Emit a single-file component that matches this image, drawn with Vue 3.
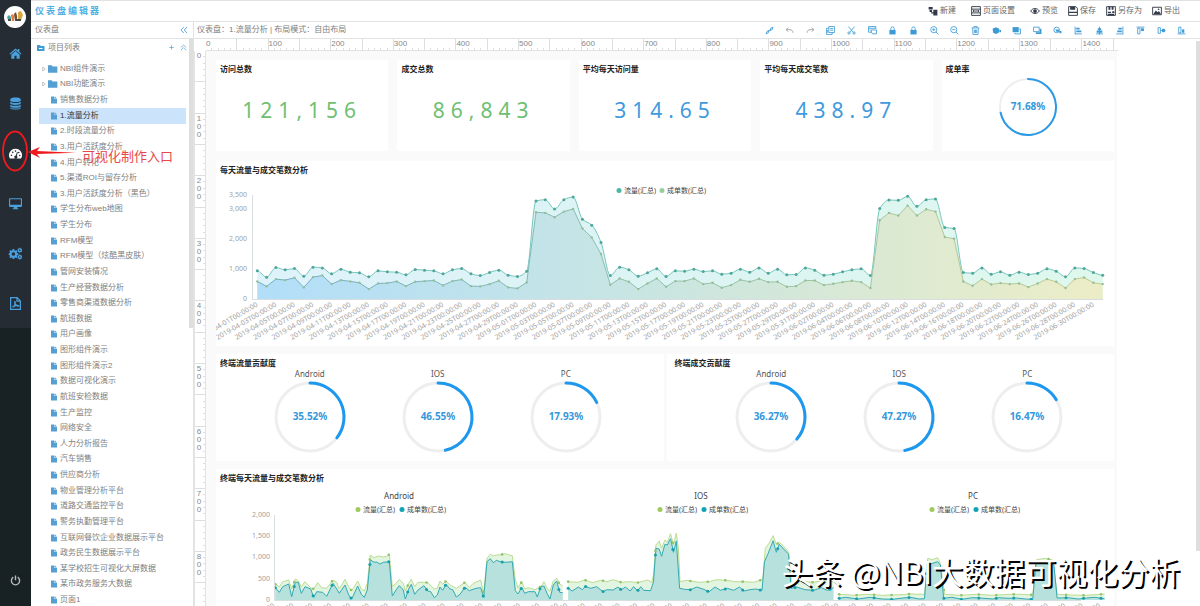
<script setup>
const tree = [
  'NBI组件演示', 'NBI功能演示', '销售数据分析', '1.流量分析', '2.时段流量分析', '3.用户活跃度分析', '4.用户转化',
  '5.渠道ROI与留存分析', '3.用户活跃度分析（黑色）', '学生分布web地图', '学生分布', 'RFM模型', 'RFM模型（炫酷黑皮肤）',
  '管网安装情况', '生产经营数据分析', '零售商渠道数据分析', '航班数据', '用户画像', '图形组件演示', '图形组件演示2',
  '数据可视化演示', '航班安检数据', '生产监控', '网络安全', '人力分析报告', '汽车销售', '供应商分析', '物业管理分析平台',
  '道路交通监控平台', '警务执勤管理平台', '互联网餐饮企业数据展示平台', '政务民生数据展示平台', '某学校招生可视化大屏数据',
  '某市政务服务大数据', '页面1',
].map((name, i) => ({ name, folder: i < 2, active: i === 3 }))

/* f: filled shape, s: stroked shape, on a 16 x 16 grid */
const icons = {
  home: [{ f: 'M8 1.8 0.6 8.2l1 1.1L8 3.9l6.4 5.4 1-1.1-2.6-2.2V2.4h-2v1.9zM8 5 2.8 9.4V14.4h3.9v-3.7h2.6v3.7h3.9V9.4z' }],
  database: [{ f: 'M1.5 3c0-3 13-3 13 0v1.2c0 2.6-13 2.6-13 0zM1.5 5.8c2 2 11 2 13 0v2c0 2.6-13 2.6-13 0zM1.5 9.4c2 2 11 2 13 0v2c0 2.6-13 2.6-13 0zM1.5 12.8c2 2 11 2 13 0v.6c0 2.8-13 2.8-13 0z' }],
  gauge: [{ f: 'M8 2a8 8 0 0 0-6.8 12.2h13.6A8 8 0 0 0 8 2zM3 9.2a1 1 0 1 1 0 2 1 1 0 0 1 0-2zM4.6 5.6a1 1 0 1 1 0 2 1 1 0 0 1 0-2zM8 4a1 1 0 1 1 0 2 1 1 0 0 1 0-2zM9.8 6.2l1.1.4-1.3 4.2a1.9 1.9 0 1 1-1.2-.4zM12 5.8a1 1 0 1 1 0 2 1 1 0 0 1 0-2zM13.2 9.4a1 1 0 1 1 0 2 1 1 0 0 1 0-2z' }],
  desktop: [{ f: 'M0 2.6C0 1.8.6 1.4 1.2 1.4h13.6c.6 0 1.2.4 1.2 1.2v8.6c0 .7-.6 1.1-1.2 1.1H10l.6 1.8h.9v1h-7v-1h.9l.6-1.8H1.2c-.6 0-1.2-.4-1.2-1.1zM1.4 2.8v6.8h13.2V2.8z' }],
  cogs: [
    { f: 'M4.4 2.6h2l.3 1.6 1 .4 1.3-.9 1.4 1.4-.9 1.3.4 1 1.6.3v2l-1.6.3-.4 1 .9 1.3L9 13.7l-1.3-.9-1 .4-.3 1.6h-2l-.3-1.6-1-.4-1.3.9L.4 12.3l.9-1.3-.4-1-1.2-.3v-2l1.2-.3.4-1-.9-1.3 1.4-1.4 1.3.9 1-.4zM5.4 6.5a2.2 2.2 0 1 0 0 4.400 2.2 2.2 0 0 0 0-4.400z' },
    { s: 'M13.3 2.2a1.7 1.7 0 1 1 0 3.4 1.7 1.7 0 1 1 0-3.4zM13.3.8v1M13.3 6v1M10.7 2.4l.9.5M15 4.9l.9.5M15.9 2.4l-.9.5M11.6 4.9l-.9.5M13.3 10.6a1.7 1.7 0 1 1 0 3.4 1.7 1.7 0 1 1 0-3.4zM13.3 9.3v1M13.3 14.4v1M10.7 10.9l.9.5M15 13.3l.9.5M15.9 10.9l-.9.5M11.6 13.3l-.9.5' },
  ],
  pdf: [{ s: 'M2 .8h8l4 4v10.4H2zM9.8 1v4H14M4.3 12.6c2-1.4 3.6-4.6 3.3-6.6-.3-1-1.3 0-.3 2 .7 1.5 1.9 3 4 3.3 1.3 0 .9-1.2-1-1.1-2 .1-4 .8-6 2.4z' }],
  power: [{ s: 'M4.8 3.2a6 6 0 1 0 6.4 0M8 .8v7' }],
  create: [{ f: 'M1 1.5h6.5v4H1zM2.5 6.5h4v3h-4zM8.5 6H15v9H8.5v-3H5v-2h3.5z' }],
  page: [{ s: 'M1 1h14v14H1zM1 5h14M1 11h14M4 8h8M4 6.5v3M12 6.5v3' }],
  eye: [{ s: 'M1 8c3.5-5.3 10.5-5.3 14 0-3.5 5.3-10.5 5.3-14 0z' }, { f: 'M8 5a3 3 0 1 1 0 6 3 3 0 0 1 0-6z' }],
  save: [{ s: 'M1 1h11.5L15 3.5V15H1z' }, { f: 'M3.5 1h8v5h-8zM1 9h14v2H1z' }],
  saveas: [{ s: 'M1 1h14v14H1z' }, { f: 'M4 1h3v5H4zM9 1h3v5H9zM3 9h5v2H3zM3 12.5h10V15H3zM10 8.5h3.5V11H10z' }],
  image: [{ s: 'M1 2h14v12H1z' }, { f: 'M2 13l4-6 3 3 2-2 3.5 5zM10.5 4a1.3 1.3 0 1 1 0 2.6 1.3 1.3 0 0 1 0-2.6z' }],
  folder: [{ f: 'M0 2h6l1.5 2H15v10H0z' }],
  doc: [{ f: 'M2 1h7v5h5v9H2zM10 1l4 4h-4z' }],
  link: [{ s: 'M2 14l1.5-4.5L7 8l-1 4zM9 8l1.2-4L14 2l-1 4zM5 11l6-6' }],
  undo: [{ s: 'M6 3 2 6.5 6 10M2.5 6.500H9c3 0 5 2 5 5.5' }],
  redo: [{ s: 'M10 3l4 3.5-4 3.5M13.5 6.500H7c-3 0-5 2-5 5.5' }],
  copy: [{ s: 'M5 1h10v10.5H5zM5 4H1v11h10v-3.5M7.5 4.500h5M7.5 7.500h5M3 7v5' }],
  cut: [{ s: 'M2.5 1l8.5 10M13.5 1 5 11M3.5 10.5a2 2 0 1 1 0 4 2 2 0 1 1 0-4zM12.5 10.5a2 2 0 1 1 0 4 2 2 0 1 1 0-4z' }],
  paste: [{ s: 'M6 11H1V1h13v4M1 4h13M6 7h9v7H9l-3-2zM3 7h2' }],
  lock: [{ f: 'M2.5 7h11v8h-11z' }, { s: 'M5 7V4.5a3 3 0 0 1 6 0V7' }],
  zoomin: [{ s: 'M6.7 1a5.5 5.5 0 1 1 0 11 5.5 5.5 0 1 1 0-11zM10.7 10.7 15 15M4 6.500h5.4M6.7 4v5' }],
  zoomout: [{ s: 'M6.7 1a5.5 5.5 0 1 1 0 11 5.5 5.5 0 1 1 0-11zM10.7 10.7 15 15M4 6.500h5.4' }],
  trash: [{ s: 'M1 3.500h14M5 3V1h6v2M3 4l.5 11h9L13 4M6 6.500v6M8 6.500v6M10 6.500v6' }],
  cube: [{ f: 'M1 5l6-3 6 3-1 7-5 2-5-2zM13 7h3v4h-3z' }],
  front: [{ f: 'M1 2h11v9H1z' }, { s: 'M13 5h2v9H5v-2' }],
  back: [{ s: 'M1 2h10v8H1z' }, { f: 'M12 5h3v9H5v-3h7z' }],
  group: [{ s: 'M6.5 2a5 5 0 1 1 0 10 5 5 0 1 1 0-10z' }, { f: 'M4 6h6l2 4H6zM12 9h3v4h-4z' }],
  alignl: [{ s: 'M2 1v14M2 14h12' }, { f: 'M4 3h6v3H4zM4 8h9v3H4z' }],
  alignc: [{ s: 'M8 1v14M2 14h12' }, { f: 'M5 4h6v3H5zM3 8h10v4H3z' }],
  alignr: [{ s: 'M14 1v14M2 14h12' }, { f: 'M6 3h6v3H6zM4 8h8v3H4z' }],
  top: [{ s: 'M1 2h14M3 4h4v10H3z' }, { f: 'M9 4h5v5H9z' }],
  middle: [{ s: 'M2 3h4v10H2zM6 8h9' }, { f: 'M9 5h5v6H9z' }],
  bottom: [{ s: 'M1 14h14M3 2h4v10H3z' }, { f: 'M9 6h4v6H9z' }],
  collapse: [{ s: 'M7.5 2 2 8l5.5 6M14 2 8.5 8l5.5 6' }],
  up: [{ s: 'M2 8l6-5.5L14 8M2 14l6-5.500L14 14' }],
  plus: [{ s: 'M8 3v10M3 8h10' }],
}
const nav = [
  ['home', '首页'], ['database', '数据源'], ['gauge', '仪表盘'], ['desktop', '大屏'], ['cogs', '设置'], ['pdf', '报告'],
]
const actions = [
  ['create', '新建'], ['page', '页面设置'], ['eye', '预览'], ['save', '保存'], ['saveas', '另存为'], ['image', '导出'],
]
const tools = [
  'link', 'undo', 'redo', 'copy', 'cut', 'paste', 'lock', 'lock', 'zoomin', 'zoomout', 'trash', 'cube', 'front', 'back',
  'group', 'alignl', 'alignc', 'alignr', 'top', 'middle', 'bottom',
]

const step = 0.626
const ticks = (max) => Array.from({ length: Math.floor(max / 10) + 1 }, (_, i) => ({
  p: Math.round(i * 10 * step) - 0.5,
  len: i % 5 === 0 ? 12 : 3,
}))
const hTicks = ticks(1450)
const vTicks = ticks(880)
const hLabels = Array.from({ length: 15 }, (_, i) => i * 100)
const vLabels = Array.from({ length: 9 }, (_, i) => i * 100)

const kpis = [
  { title: '访问总数', value: '121,156', tone: 'green' },
  { title: '成交总数', value: '86,843', tone: 'green' },
  { title: '平均每天访问量', value: '314.65', tone: 'blue' },
  { title: '平均每天成交笔数', value: '438.97', tone: 'blue' },
]
const shares = [
  { title: '终端流量贡献度', side: 'left', items: [['Android', 35.52], ['IOS', 46.55], ['PC', 17.93]] },
  { title: '终端成交贡献度', side: 'right', items: [['Android', 36.27], ['IOS', 47.27], ['PC', 16.47]] },
]
const arc = (pct, r) => {
  const a = (pct / 100) * Math.PI * 2
  return `M0 ${-r}A${r} ${r} 0 ${pct > 50 ? 1 : 0} 1 ${r * Math.sin(a)} ${-r * Math.cos(a)}`
}

const visits = [
  944, 733, 1056, 978, 1022, 767, 1067, 1044, 844, 1000, 900, 878, 744, 944, 911, 900, 811, 989, 967, 944, 844, 978, 1022,
  844, 789, 889, 967, 800, 756, 933, 3289, 3333, 3022, 3333, 3422, 2678, 2478, 1900, 789, 1067, 978, 767, 878, 1011, 756,
  944, 933, 1000, 922, 944, 833, 867, 1000, 900, 1044, 867, 1000, 811, 822, 1044, 967, 800, 833, 911, 978, 1011, 789, 3033,
  3322, 3311, 3444, 3111, 3333, 3356, 2400, 2367, 889, 867, 1044, 833, 911, 800, 900, 822, 867, 1011, 933, 744, 1044, 1022,
  889, 800,
]
const orders = [
  589, 422, 667, 633, 711, 389, 733, 789, 500, 633, 589, 544, 333, 522, 533, 589, 433, 578, 600, 622, 456, 600, 656, 433,
  422, 500, 611, 389, 356, 556, 2911, 2889, 2744, 2933, 3022, 2367, 2067, 1511, 478, 689, 578, 333, 522, 689, 411, 600,
  600, 689, 500, 544, 378, 467, 644, 578, 678, 567, 578, 411, 433, 622, 622, 467, 511, 567, 611, 567, 367, 2644, 2889,
  2800, 3133, 2800, 3011, 2933, 2078, 2022, 589, 444, 667, 489, 533, 500, 522, 400, 522, 667, 578, 367, 667, 722, 544, 500,
]
const base = 138
const toPoints = (list) => list.map((v, i) => [41.3 + i * 9.29, base - v * 0.0298])
const visitPts = toPoints(visits)
const orderPts = toPoints(orders)
const line = (pts) => 'M' + pts.map((p) => p[0].toFixed(1) + ' ' + p[1].toFixed(1)).join('L')
const smooth = (pts) => {
  const slope = pts.map((p, i) => {
    if (i === 0 || i === pts.length - 1) return 0
    const a = (p[1] - pts[i - 1][1]) / (p[0] - pts[i - 1][0])
    const b = (pts[i + 1][1] - p[1]) / (pts[i + 1][0] - p[0])
    return a * b <= 0 ? 0 : (2 * a * b) / (a + b)
  })
  let d = `M${pts[0][0]} ${pts[0][1]}`
  for (let i = 1; i < pts.length; i++) {
    const [x0, y0] = pts[i - 1]
    const [x1, y1] = pts[i]
    const t = (x1 - x0) / 3
    d += `C${x0 + t} ${y0 + slope[i - 1] * t} ${x1 - t} ${y1 - slope[i] * t} ${x1} ${y1}`
  }
  return d
}
const close = (d, pts, y) => `${d}L${pts[pts.length - 1][0]} ${y}L${pts[0][0]} ${y}Z`
const pad = (n) => String(n).padStart(2, '0')
const dates = Array.from({ length: 46 }, (_, i) => {
  const d = new Date(2019, 3, 1 + i * 2)
  return { x: 41.3 + i * 18.58, text: `2019-${pad(d.getMonth() + 1)}-${pad(d.getDate())}T00:00:00` }
})
const yTop = [['3,500', 34], ['3,000', 48], ['2,000', 78], ['1,000', 108], ['0', 138]]
const yLow = [['2,000', 46], ['1,500', 67], ['1,000', 88], ['500', 110], ['0', 131]]

const parse = (text, kx, ox) => text.split(' ').map((s) => {
  const [x, y] = s.split(',').map(Number)
  return [x / kx + ox, y / 3 - 4]
})
const terminals = [
  {
    name: 'Android', cx: 183, kx: 3, ox: -26,
    low: '256,368 268,382 278,365 296,357 305,395 316,352 325,352 334,385 345,365 362,372 371,397 380,380 398,382 410,394 429,355 440,372 448,385 465,360 476,390 485,402 503,363 514,388 523,397 532,375 541,284 552,292 560,291 570,297 580,292 598,290 607,393 618,375 628,362 640,375 646,402 656,372 664,358 674,388 684,375 702,362 713,378 722,380 733,398 742,390 750,366 758,376 768,358 780,372 788,374 799,396 810,388 825,367 838,377 846,374 858,370 872,368 881,397 891,290 901,281 910,293 920,286 930,290 948,292 967,290 976,377 984,387 995,367 1004,385 1015,380 1035,380 1042,396 1052,365 1062,363 1071,385 1080,402 1090,360 1100,348 1109,382 1118,383',
    high: '256,358 268,365 278,350 296,345 305,372 316,342 325,348 334,365 345,350 362,368 371,372 383,353 395,368 410,370 429,345 440,352 448,372 465,343 476,365 485,378 503,348 514,372 523,378 532,355 541,270 552,278 565,273 580,276 590,274 598,268 607,365 618,355 628,343 640,355 646,378 656,355 664,343 674,365 684,352 702,352 713,353 733,372 742,370 750,348 758,358 768,348 780,360 799,370 810,362 825,352 838,368 850,355 872,345 881,385 891,280 901,268 910,272 920,270 938,268 948,266 957,270 967,272 976,345 984,368 995,350 1004,372 1015,368 1035,374 1052,365 1062,350 1071,370 1080,378 1090,348 1100,340 1109,358 1118,362',
  },
  {
    name: 'IOS', cx: 485, kx: 2.45, ox: 344,
    low: '20,370 30,378 45,366 55,374 62,364 75,370 90,365 105,380 115,374 130,375 142,366 150,375 160,366 172,378 180,365 190,377 198,365 205,376 222,377 229,350 235,250 243,252 249,274 257,238 263,240 271,221 278,262 285,228 293,370 305,373 320,374 335,366 350,372 365,380 380,366 393,376 410,370 425,376 440,366 450,378 465,374 480,372 495,376 501,290 510,265 522,227 530,262 537,238 548,252 560,268 566,370 580,366 600,374 622,376 640,368 655,376 670,368',
    high: '20,350 45,352 60,345 80,353 100,346 115,350 130,344 150,352 172,350 190,353 215,345 225,352 229,330 235,240 243,228 249,250 257,225 263,232 271,206 278,240 285,205 290,250 294,350 310,346 340,352 365,350 385,344 407,346 430,350 450,350 475,352 492,345 497,340 503,250 512,235 522,212 530,238 537,232 548,244 560,262 567,350 590,348 620,352 650,346 670,350',
  },
  {
    name: 'PC', cx: 757, kx: 2.45, ox: 344,
    low: '684,400 700,397 730,402 760,397 790,402 815,403 840,399 858,397 880,402 893,401 900,292 910,296 925,290 932,300 940,400 960,397 985,403 1010,398 1030,399 1060,402 1075,398 1100,400 1118,399 1140,402 1158,403 1166,296 1180,290 1200,296 1210,300 1218,399 1245,398 1270,402 1290,399 1310,397 1334,401',
    high: '684,388 720,391 750,388 790,391 830,389 860,387 893,388 901,280 912,284 925,278 932,296 942,388 980,391 1020,388 1060,391 1100,388 1130,388 1158,390 1168,284 1190,280 1208,286 1218,388 1250,390 1290,391 1334,387',
  },
].map((t) => {
  const low = parse(t.low, t.kx, t.ox)
  const high = parse(t.high, t.kx, t.ox)
  const x0 = low[0][0]
  const x1 = low[low.length - 1][0]
  const every = (x1 - x0) / 15.2
  const at = (pts, x) => {
    const i = Math.max(1, pts.findIndex((p) => p[0] >= x))
    const [a, b] = [pts[i - 1], pts[i]]
    return a[1] + ((b[1] - a[1]) * (x - a[0])) / (b[0] - a[0])
  }
  const marks = Array.from({ length: 16 }, (_, i) => {
    const x = x0 + i * every
    return { x, high: at(high, x), low: at(low, x) }
  })
  return { ...t, low, high, marks }
})
</script>

<template>
  <div class="app">
    <aside class="rail">
      <div class="rail-top">
        <svg class="avatar" viewBox="0 0 22 22">
          <circle cx="11" cy="11" r="11" fill="#fff" />
          <path d="M3 11l2-2 2 2v3H4z" fill="#49a4a0" /><path d="M7 9l2-1 1 2v5H8z" fill="#e5793b" />
          <path d="M10 8l2-2 1 4v5h-2z" fill="#75492e" /><path d="M14 6l3-1 2 4-2 5h-3z" fill="#d8a743" />
          <path d="M4 13h3v2H4zM12 13h5v2h-5z" fill="#4b4a48" />
        </svg>
        <nav>
          <a v-for="n in nav" :key="n[0]" href="#" :aria-label="n[1]" :class="{ current: n[0] === 'gauge' }">
            <svg class="ico" viewBox="0 0 16 16">
              <path v-for="(p, i) in icons[n[0]]" :key="i" :d="p.f || p.s" :class="p.f ? 'fill' : 'line'" />
            </svg>
          </a>
        </nav>
      </div>
      <button class="power" aria-label="退出">
        <svg class="ico" viewBox="0 0 16 16"><path v-for="(p, i) in icons.power" :key="i" :d="p.s" class="line" /></svg>
      </button>
    </aside>

    <div class="work">
      <header class="top">
        <h1>仪表盘编辑器</h1>
        <div class="actions">
          <button v-for="a in actions" :key="a[0]">
            <svg class="ico" viewBox="0 0 16 16">
              <path v-for="(p, i) in icons[a[0]]" :key="i" :d="p.f || p.s" :class="p.f ? 'fill' : 'line'" />
            </svg>{{ a[1] }}
          </button>
        </div>
      </header>

      <div class="body">
        <section class="side">
          <div class="bar side-bar">
            <span>仪表盘</span>
            <button aria-label="收起">
              <svg class="ico" viewBox="0 0 16 16"><path :d="icons.collapse[0].s" class="line" /></svg>
            </button>
          </div>
          <div class="side-body">
            <div class="tree-wrap">
              <div class="tree-head">
                <svg class="ico" viewBox="0 0 16 16"><path :d="icons.folder[0].f" class="fill" /><path d="M4 9h7" stroke="#fff" stroke-width="2" /></svg>
                <span>项目列表</span>
                <button aria-label="添加"><svg class="ico" viewBox="0 0 16 16"><path :d="icons.plus[0].s" class="line" /></svg></button>
                <button aria-label="折叠"><svg class="ico" viewBox="0 0 16 16"><path :d="icons.up[0].s" class="line" /></svg></button>
              </div>
              <ul class="tree">
                <li v-for="(t, i) in tree" :key="i" :class="{ active: t.active, folder: t.folder }">
                  <svg v-if="t.folder" class="caret" viewBox="0 0 6 8"><path d="M1 1l4 3-4 3z" fill="none" stroke="#aaa" /></svg>
                  <svg class="ico" viewBox="0 0 16 16"><path :d="(t.folder ? icons.folder : icons.doc)[0].f" class="fill" /></svg>
                  <a href="#">{{ t.name }}</a>
                </li>
              </ul>
            </div>
            <div class="side-scroll"></div>
          </div>
        </section>

        <main class="main">
          <div class="bar main-bar">
            <span>仪表盘：1.流量分析 | 布局模式：自由布局</span>
            <div class="tools">
              <button v-for="(t, k) in tools" :key="k" :class="{ dim: t === 'undo' || t === 'redo' }" :aria-label="t">
                <svg class="ico" viewBox="0 0 16 16">
                  <path v-for="(p, i) in icons[t]" :key="i" :d="p.f || p.s" :class="p.f ? 'fill' : 'line'" />
                </svg>
              </button>
            </div>
          </div>

          <div class="stage">
            <div class="corner"></div>
            <svg class="hruler">
              <line v-for="(t, i) in hTicks" :key="i" :x1="t.p" :x2="t.p" :y1="12 - t.len" y2="12" stroke="#dedede" />
              <line x1="0" x2="100%" y1="11.5" y2="11.5" stroke="#e2e2e2" />
              <text v-for="l in hLabels" :key="l" :x="l * step" y="7">{{ l }}</text>
            </svg>
            <svg class="vruler">
              <line v-for="(t, i) in vTicks" :key="i" :y1="t.p" :y2="t.p" :x1="12 - t.len" x2="12" stroke="#dedede" />
              <line x1="11.5" x2="11.5" y1="0" y2="100%" stroke="#e2e2e2" />
              <line x1="0.5" x2="0.5" y1="0" y2="100%" stroke="#e4e4e4" />
              <template v-for="l in vLabels" :key="l">
                <text v-for="(c, i) in String(l)" :key="i" x="5" :y="l * step + 7 + i * 8" text-anchor="middle">{{ c }}</text>
              </template>
            </svg>

            <div class="canvas">
              <div class="row">
                <article v-for="k in kpis" :key="k.title" class="card kpi">
                  <h2>{{ k.title }}</h2>
                  <p :class="k.tone">{{ k.value }}</p>
                </article>
                <article class="card kpi">
                  <h2>成单率</h2>
                  <svg class="dial-small" viewBox="-30 -30 60 60">
                    <circle r="28" fill="none" stroke="#eee" stroke-width="2" />
                    <path :d="arc(71.68, 28)" fill="none" stroke="#2b9ae6" stroke-width="2" stroke-linecap="round" />
                    <text class="pct" y="3">71.68%</text>
                  </svg>
                </article>
              </div>

              <article class="card trend">
                <h2>每天流量与成交笔数分析</h2>
                <svg class="plot" viewBox="0 0 898 185">
                  <defs>
                    <linearGradient id="gLow"><stop offset="0" stop-color="#b2def9" /><stop offset=".45" stop-color="#c8e5e2" /><stop offset="1" stop-color="#ecedc6" /></linearGradient>
                    <linearGradient id="gHigh"><stop offset="0" stop-color="#def2fb" /><stop offset=".5" stop-color="#dcf4f3" /><stop offset="1" stop-color="#dff8ed" /></linearGradient>
                    <linearGradient id="gLine"><stop offset="0" stop-color="#70abc8" /><stop offset=".45" stop-color="#8fbfae" /><stop offset="1" stop-color="#c5ca8c" /></linearGradient>
                  </defs>
                  <circle cx="403" cy="29.5" r="2.5" fill="#4bb5a6" /><text class="legend" x="408" y="32">流量(汇总)</text>
                  <circle cx="446" cy="29.5" r="2.5" fill="#9ccb9b" /><text class="legend" x="451" y="32">成单数(汇总)</text>
                  <path :d="close(smooth(visitPts), visitPts, base)" fill="url(#gHigh)" />
                  <path :d="close(line(orderPts), orderPts, base)" fill="url(#gLow)" />
                  <path :d="smooth(visitPts)" fill="none" stroke="#77c6bd" />
                  <path :d="line(orderPts)" fill="none" stroke="url(#gLine)" />
                  <circle v-for="(p, i) in visitPts" :key="'v' + i" :cx="p[0]" :cy="p[1]" r="1.5" fill="#4fa79b" />
                  <circle v-for="(p, i) in orderPts" :key="'o' + i" :cx="p[0]" :cy="p[1]" r="1.2" fill="#93bf9a" />
                  <path d="M36.5 34V138.5H887" fill="none" stroke="#d8dde0" />
                  <text v-for="y in yTop" :key="y[0]" class="axis" x="31" :y="y[1] + 2" text-anchor="end">{{ y[0] }}</text>
                  <text v-for="d in dates" :key="d.text" class="axis" text-anchor="end" :transform="`translate(${d.x + 1} 145) rotate(-30)`">{{ d.text }}</text>
                </svg>
              </article>

              <div class="row halves">
                <article v-for="s in shares" :key="s.title" class="card share" :class="s.side">
                  <h2>{{ s.title }}</h2>
                  <div class="dials">
                    <figure v-for="d in s.items" :key="d[0]">
                      <figcaption>{{ d[0] }}</figcaption>
                      <svg viewBox="-38 -38 76 76">
                        <circle r="34" fill="none" stroke="#eee" stroke-width="3" />
                        <path :d="arc(d[1], 34)" fill="none" stroke="#1c98ee" stroke-width="3" stroke-linecap="round" />
                        <text class="pct" y="3">{{ d[1] }}%</text>
                      </svg>
                    </figure>
                  </div>
                </article>
              </div>

              <article class="card trend">
                <h2>终端每天流量与成交笔数分析</h2>
                <svg class="plot" viewBox="0 0 898 160">
                  <g v-for="t in terminals" :key="t.name">
                    <text class="name" :x="t.cx" y="30" text-anchor="middle">{{ t.name }}</text>
                    <circle :cx="t.cx - 41" cy="40.5" r="2.5" fill="#9ecb5c" /><text class="legend" :x="t.cx - 36" y="43">流量(汇总)</text>
                    <circle :cx="t.cx + 3" cy="40.5" r="2.5" fill="#12a3b4" /><text class="legend" :x="t.cx + 8" y="43">成单数(汇总)</text>
                    <path :d="close(line(t.high), t.high, 131)" fill="#e2f5e0" />
                    <path :d="close(line(t.low), t.low, 131)" fill="#b6e1dc" />
                    <path :d="line(t.high)" fill="none" stroke="#bcdc92" />
                    <path :d="line(t.low)" fill="none" stroke="#35a9b4" />
                    <g v-for="(m, i) in t.marks" :key="i">
                      <circle :cx="m.x" :cy="m.high" r="1.3" fill="#92c46c" />
                      <circle :cx="m.x" :cy="m.low" r="1.5" fill="#179fac" />
                      <text class="axis" text-anchor="end" :transform="`translate(${m.x} 138) rotate(-30)`">00:00</text>
                    </g>
                  </g>
                  <path d="M58.5 46V131.5H865" fill="none" stroke="#d8dde0" />
                  <text v-for="y in yLow" :key="y[0]" class="axis" x="54" :y="y[1] + 2" text-anchor="end">{{ y[0] }}</text>
                </svg>
              </article>
            </div>
            <div class="main-scroll"></div>
          </div>
        </main>
      </div>
    </div>

    <svg class="pointer" viewBox="0 0 80 44">
      <ellipse cx="15" cy="21" rx="12" ry="19.5" fill="none" stroke="#f01a1e" stroke-width="1.8" />
      <path d="M28 22l12-5-3 4 39 1.8-39 1.200 3 4z" fill="#f01a1e" />
    </svg>
    <div class="note">可视化制作入口</div>
    <div class="mark">头条 @NBI大数据可视化分析</div>
  </div>
</template>

<style>
body { margin: 0; background: #fff; }
</style>

<style scoped>
.app {
  position: relative; display: flex; height: 100vh; overflow: hidden;
  font-family: "Liberation Sans", "Noto Sans CJK SC", sans-serif; font-size: 8px; line-height: 12px; color: #808080;
}
.app * { box-sizing: border-box; }
button { padding: 0; border: 0; background: none; font: inherit; color: inherit; display: flex; align-items: center; }
h1, h2, p, ul, figure { margin: 0; padding: 0; }
a { color: inherit; text-decoration: none; }
svg { display: block; }
.ico { width: 10px; height: 10px; flex: none; overflow: visible; }
.ico .fill { fill: currentColor; fill-rule: evenodd; }
.ico .line { fill: none; stroke: currentColor; stroke-width: 1.5; }

.rail { width: 31px; flex: none; background: #182124; display: flex; flex-direction: column; justify-content: space-between; align-items: center; }
.rail-top { width: 100%; background: #262c33; }
.avatar { width: 22px; height: 22px; margin: 6px 0 0 4px; }
.rail nav a { display: flex; height: 50px; align-items: center; justify-content: center; color: #4aa0dc; }
.rail nav .current { color: #fff; }
.rail nav .ico { width: 13px; height: 13px; }
.power { margin-bottom: 20px; color: #b9bdbf; }
.power .ico { width: 11px; height: 11px; }
.power .line { stroke-width: 2; }

.work { flex: 1; min-width: 0; display: flex; flex-direction: column; border-top: 1px solid #e2e2e2; }
.top { height: 21px; flex: none; display: flex; align-items: center; justify-content: space-between; padding: 0 20px 0 4px; border-bottom: 1px solid #e2e2e2; }
.top h1 { font-size: 9px; line-height: 12px; letter-spacing: 2px; font-weight: 700; color: #4fb0e4; margin-bottom: 1px; }
.actions { display: flex; gap: 10px; color: #666; }
.actions button { gap: 2px; white-space: nowrap; }
.actions button:nth-child(-n+2) { margin-right: 5px; }
.actions .ico { color: #333b4a; }

.body { flex: 1; min-height: 0; display: flex; }
.bar { height: 17px; flex: none; display: flex; align-items: center; justify-content: space-between; border-bottom: 1px solid #e2e2e2; }
.side { width: 163px; flex: none; display: flex; flex-direction: column; border-right: 1px solid #e2e2e2; }
.side-bar { padding: 0 5px 0 4px; }
.side-bar button { color: #2f8fd0; }
.side-bar .ico { width: 8px; height: 8px; }
.side-body { flex: 1; min-height: 0; display: flex; }
.tree-wrap { flex: 1; display: flex; flex-direction: column; }
.tree-head { height: 22px; flex: none; display: flex; align-items: center; gap: 3px; padding: 0 2px 5px 6px; }
.tree-head span { flex: 1; }
.tree-head > .ico { width: 8px; height: 8px; color: #3f9cd6; }
.tree-head button { color: #3f9cd6; margin-left: 2px; }
.tree-head button .ico { width: 7px; height: 7px; }
.tree { flex: 1; list-style: none; display: flex; flex-direction: column; padding-left: 8px; margin-bottom: -2px; }
.tree li { flex: 1; display: flex; align-items: center; gap: 2px; padding-left: 11px; margin-right: 3px; white-space: nowrap; line-height: 14px; }
.tree li.folder { padding-left: 3px; gap: 2px; }
.tree li.active { background: #cbe3fb; color: #333; }
.tree .ico { width: 8px; height: 8px; color: #559fd3; }
.tree .folder .ico { width: 10px; height: 10px; }
.caret { width: 4px; height: 6px; }
.side-scroll { width: 4px; height: 51%; background: #dedede; }

.main { flex: 1; min-width: 0; display: flex; flex-direction: column; }
.main-bar { padding: 0 13px 0 3px; }
.tools { display: flex; justify-content: space-between; width: 423px; color: #3c9ad6; }
.tools .dim { color: #999; }
.tools .ico { width: 9px; height: 9px; }
.tools button { width: 10px; justify-content: center; }

.stage { position: relative; flex: 1; min-height: 0; overflow: hidden; display: grid; grid-template: 12px 1fr / 12px 1fr; }
.hruler { width: calc(100% - 82px); height: 12px; overflow: hidden; }
.vruler { width: 12px; height: 100%; }
.stage text { font-family: "Noto Sans", "Noto Sans CJK SC", sans-serif; }
.hruler text, .vruler text { font-size: 8px; fill: #888; font-family: "Liberation Sans", sans-serif; }
.main-scroll { position: absolute; right: 0; top: 2px; width: 4px; height: 90%; background: #dedede; }
.canvas { margin-right: 83px; padding: 9px 3px 0 10px; background: #fafafa; display: flex; flex-direction: column; gap: 8px; min-height: 0; }
.row { display: grid; grid-template-columns: repeat(5, 1fr); gap: 9px; margin-bottom: 2px; }
.halves { grid-template-columns: 1fr 1fr; gap: 3px; margin-bottom: 0; }
.card { background: #fff; position: relative; min-width: 0; flex: none; }
.card h2 { font: 700 8px/12px "Noto Sans CJK SC", sans-serif; color: #222; padding: 3px 0 0 4px; }
.kpi { height: 91px; }
.kpi p { margin-top: 20px; text-align: center; font: 400 21px/30px "Noto Sans", sans-serif; letter-spacing: 6px; }
.green { color: #6fbf73; }
.blue { color: #3f9ade; }
.dial-small { width: 60px; margin: 2px auto 0; }
.pct { font-size: 10px; font-weight: 700; fill: #3598dc; text-anchor: middle; }
.trend h2 { position: absolute; left: 0; top: 0; }
.plot { width: 100%; overflow: hidden; }
.axis { font-size: 7px; fill: #a0a0a0; }
.legend { font-size: 7px; fill: #444; }
.name { font-size: 8px; fill: #444; }
.share { height: 107px; }
.dials { display: flex; justify-content: center; }
.left .dials { padding-right: 4px; }
.right .dials { padding-left: 18px; }
.right h2 { padding-left: 8px; }
.dials figure { width: 128px; text-align: center; }
.dials figcaption { font: 400 8px/10px "Noto Sans", sans-serif; color: #555; }
.dials svg { width: 76px; margin: 0 auto; }

.pointer { position: absolute; left: 0; top: 130px; width: 80px; height: 44px; }
.note { position: absolute; left: 82px; top: 148px; font-size: 13px; line-height: 18px; color: #e8474a; white-space: nowrap; }
.mark { position: absolute; right: 20px; bottom: 14px; font: 400 31px/42px "Noto Sans CJK SC", sans-serif; color: #fff; text-shadow: 2px 2px 0 #000; white-space: nowrap; }
</style>
